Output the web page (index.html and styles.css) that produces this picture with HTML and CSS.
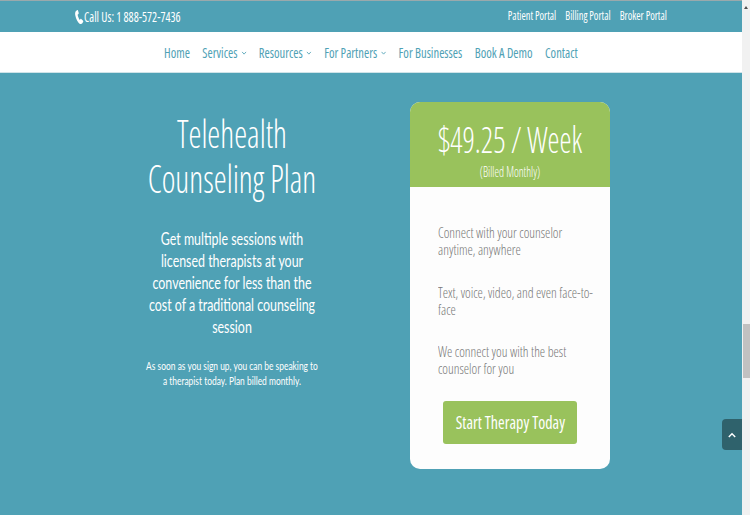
FILE: index.html
```html
<!DOCTYPE html>
<html lang="en">
<head>
<meta charset="utf-8">
<title>Telehealth Counseling Plan</title>
<link rel="stylesheet" href="styles.css">
</head>
<body>
<div class="window">
  <div class="page">
    <header class="topbar">
      <div class="call">
        <svg class="phone" viewBox="0 0 24 24" width="9" height="14" preserveAspectRatio="none"><path fill="#fff" d="M6 0 2 2C0 4 0 7 1 10c2 6 6 11 12 14 2 0 4 0 6-1l3-3c0-1 0-1-1-2l-5-3c-1 0-1 0-2 1l-1 1c-3-2-5-6-6-9l2-1c1-1 1-1 1-2L8 1C7 0 7 0 6 0Z"/></svg>
        <span class="call-text">Call Us: 1 888-572-7436</span>
      </div>
      <nav class="portals">
        <a>Patient Portal</a><a>Billing Portal</a><a>Broker Portal</a>
      </nav>
    </header>
    <div class="navband">
      <nav class="mainnav">
        <a>Home</a>
        <a>Services<svg class="caret" viewBox="0 0 8 5" width="6" height="4"><path d="M1 1l3 3 3-3" fill="none" stroke="#4fa1b5" stroke-width="1.2"/></svg></a>
        <a>Resources<svg class="caret" viewBox="0 0 8 5" width="6" height="4"><path d="M1 1l3 3 3-3" fill="none" stroke="#4fa1b5" stroke-width="1.2"/></svg></a>
        <a>For Partners<svg class="caret" viewBox="0 0 8 5" width="6" height="4"><path d="M1 1l3 3 3-3" fill="none" stroke="#4fa1b5" stroke-width="1.2"/></svg></a>
        <a>For Businesses</a>
        <a>Book A Demo</a>
        <a>Contact</a>
      </nav>
    </div>
    <main class="hero">
      <section class="intro">
        <h1>Telehealth<br>Counseling Plan</h1>
        <p class="lead">Get multiple sessions with<br>licensed therapists at your<br>convenience for less than the<br>cost of a traditional counseling<br>session</p>
        <p class="note">As soon as you sign up, you can be speaking to<br>a therapist today. Plan billed monthly.</p>
      </section>
      <section class="card">
        <div class="card-head">
          <div class="price">$49.25 / Week</div>
          <div class="billed">(Billed Monthly)</div>
        </div>
        <div class="card-body">
          <p>Connect with your counselor<br>anytime, anywhere</p>
          <p>Text, voice, video, and even face-to-<br>face</p>
          <p>We connect you with the best<br>counselor for you</p>
          <a class="cta"><span>Start Therapy Today</span></a>
        </div>
      </section>
    </main>
    <a class="totop"><svg viewBox="0 0 10 7" width="8" height="6"><path d="M1 6l4-4 4 4" fill="none" stroke="#fff" stroke-width="1.8"/></svg></a>
  </div>
  <div class="scrollbar">
    <span class="arrow"></span>
    <span class="thumb"></span>
  </div>
</div>
</body>
</html>
```
FILE: styles.css
```css
* { box-sizing: border-box; }
html, body { margin: 0; height: 100%; overflow: hidden; }
body { font-family: "Open Sans", "Liberation Sans", sans-serif; background: #4fa1b5; }
.window { display: flex; width: 750px; height: 515px; }
.page { position: relative; flex: 1; min-width: 0; background: #4fa1b5; }

.topbar { height: 32px; border-top: 1px solid #9aa9ac; display: flex; justify-content: space-between; padding: 0 75px 0 75px; color: #fff; font-weight: 500; font-stretch: 75%; }
.call { display: flex; align-items: center; gap: 0; height: 31px; font-size: 14px; white-space: nowrap; }
.phone { flex: none; }
.call-text { display: inline-block; transform: scaleX(.85); transform-origin: left center; }
.portals { display: flex; gap: 10.5px; font-size: 12px; height: 28px; align-items: center; white-space: nowrap; transform: scaleX(.865); transform-origin: right center; }

.navband { height: 41px; background: #fff; border-bottom: 1px solid #cfe3e8; display: flex; justify-content: center; align-items: center; }
.mainnav { display: flex; gap: 13.8px; color: #4fa1b5; font-size: 14px; font-stretch: 75%; white-space: nowrap; transform: scaleX(.9); }
.mainnav a { display: flex; align-items: center; }
.caret { margin-left: 4px; margin-top: 2px; }

.hero { display: flex; padding: 29px 0 0 135px; }
.intro { width: 194px; text-align: center; color: #fff; font-family: Lato, sans-serif; white-space: nowrap; }
h1 { margin: 9px -40px 0; font-family: "Open Sans", sans-serif; font-weight: 300; font-stretch: 75%; font-size: 38px; line-height: 45px; transform: scaleX(.86); }
.lead { margin: 27px -40px 0; font-size: 17px; line-height: 22px; transform: scaleX(.73); }
.note { margin: 20px -40px 0; font-size: 11px; line-height: 15px; transform: scaleX(.765); }

.card { width: 200px; height: 367px; margin-left: 81px; border-radius: 10px; overflow: hidden; background: #fdfdfd; }
.card-head { height: 85px; background: #99c25c; color: #fff; text-align: center; padding-top: 15px; font-stretch: 75%; white-space: nowrap; }
.price { font-size: 36px; line-height: 46px; font-weight: 300; transform: scaleX(.84); }
.billed { font-size: 14px; line-height: 18px; font-weight: 300; transform: scaleX(.82); }
.card-body { padding: 37px 15px 0 28px; color: #777; font-weight: 300; font-stretch: 75%; font-size: 15px; line-height: 17px; white-space: nowrap; }
.card-body p { margin: 0 0 25.5px; transform: scaleX(.895); transform-origin: left center; }
.card-body p:last-of-type { margin-bottom: 24px; }
.cta { display: block; width: 134px; height: 43px; margin: 0 0 0 5px; background: #99c25c; color: #fff; border-radius: 3px; text-align: center; font-size: 18px; line-height: 43px; font-weight: 400; }
.cta span { display: inline-block; transform: scaleX(.89); }

.totop { position: absolute; left: 722px; top: 419px; width: 20px; height: 31px; background: #2f626c; border-radius: 4px 0 0 4px; display: flex; align-items: center; justify-content: center; }

.scrollbar { width: 8px; background: #f1f1f1; display: flex; flex-direction: column; align-items: center; padding-top: 6px; }
.arrow { width: 0; height: 0; border-left: 2px solid transparent; border-right: 2px solid transparent; border-bottom: 3px solid #505050; }
.thumb { width: 7px; height: 54px; margin-top: 315px; background: #c1c1c1; }
```
